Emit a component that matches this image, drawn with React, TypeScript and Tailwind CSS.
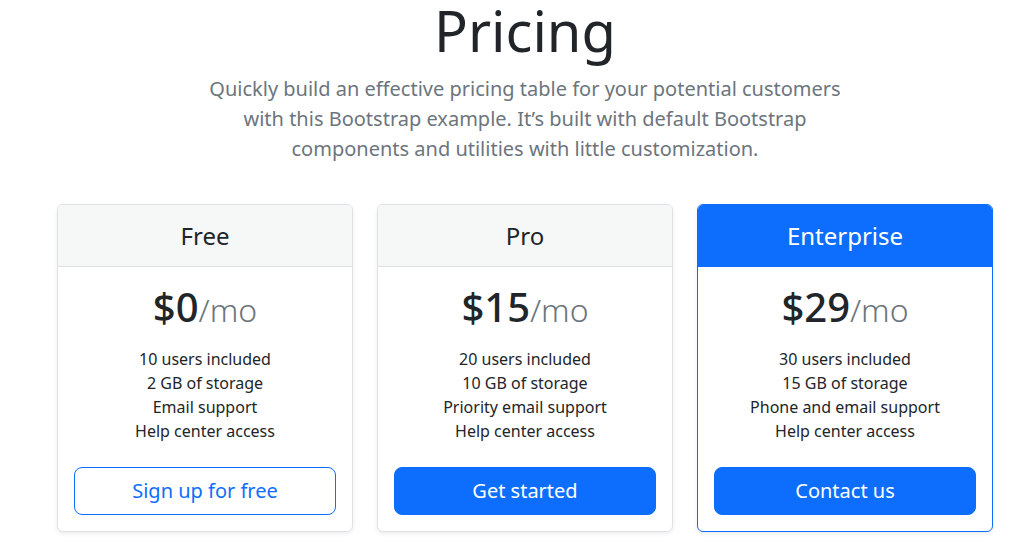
import React from 'react';

type Plan = {
  name: string;
  price: string;
  features: string[];
  cta: string;
  variant: 'outline' | 'solid';
  highlight?: boolean;
};

const plans: Plan[] = [
  {
    name: 'Free',
    price: '$0',
    features: ['10 users included', '2 GB of storage', 'Email support', 'Help center access'],
    cta: 'Sign up for free',
    variant: 'outline',
  },
  {
    name: 'Pro',
    price: '$15',
    features: ['20 users included', '10 GB of storage', 'Priority email support', 'Help center access'],
    cta: 'Get started',
    variant: 'solid',
  },
  {
    name: 'Enterprise',
    price: '$29',
    features: ['30 users included', '15 GB of storage', 'Phone and email support', 'Help center access'],
    cta: 'Contact us',
    variant: 'solid',
    highlight: true,
  },
];

function PricingCard({ plan }: { plan: Plan }) {
  return (
    <div
      className={
        plan.highlight
          ? 'flex flex-col rounded-md border border-[#0d6efd] bg-white text-center shadow-[0_2px_4px_rgba(0,0,0,0.075)]'
          : 'flex flex-col rounded-md border border-[#dee2e6] bg-white text-center shadow-[0_2px_4px_rgba(0,0,0,0.075)]'
      }
    >
      <div
        className={
          plan.highlight
            ? 'rounded-t-[5px] border-b border-[#0d6efd] bg-[#0d6efd] py-4 text-white'
            : 'rounded-t-[5px] border-b border-[#dee2e6] bg-[#f6f7f7] py-4'
        }
      >
        <h4 className="text-[24px] leading-[29px] font-normal">{plan.name}</h4>
      </div>
      <div className="p-4">
        <h1 className="h-[48px] text-[40px] leading-[48px] font-medium">
          {plan.price}
          <small className="text-[32px] leading-none font-light text-[#6c757d]">/mo</small>
        </h1>
        <ul className="mt-4 mb-6 text-[16px] leading-[24px]">
          {plan.features.map((f) => (
            <li key={f}>{f}</li>
          ))}
        </ul>
        <button
          className={
            plan.variant === 'outline'
              ? 'w-full rounded-lg border border-[#0d6efd] bg-white px-4 py-2 text-[20px] leading-[30px] text-[#0d6efd]'
              : 'w-full rounded-lg border border-[#0d6efd] bg-[#0d6efd] px-4 py-2 text-[20px] leading-[30px] text-white'
          }
        >
          {plan.cta}
        </button>
      </div>
    </div>
  );
}

export default function App() {
  return (
    <div className="flex min-h-[553px] flex-col items-center bg-white pl-[18px] font-['Noto_Sans',sans-serif] text-[#212529]">
      <h1 className="text-[56px] leading-[61px] font-normal">Pricing</h1>
      <p className="mt-[13px] w-[650px] text-center text-[20px] leading-[30px] text-[#6c757d]">
        Quickly build an effective pricing table for your potential customers with this Bootstrap example.
        It’s built with default Bootstrap components and utilities with little customization.
      </p>
      <div className="mt-[40px] grid w-[936px] grid-cols-3 gap-6">
        {plans.map((p) => (
          <PricingCard key={p.name} plan={p} />
        ))}
      </div>
    </div>
  );
}
